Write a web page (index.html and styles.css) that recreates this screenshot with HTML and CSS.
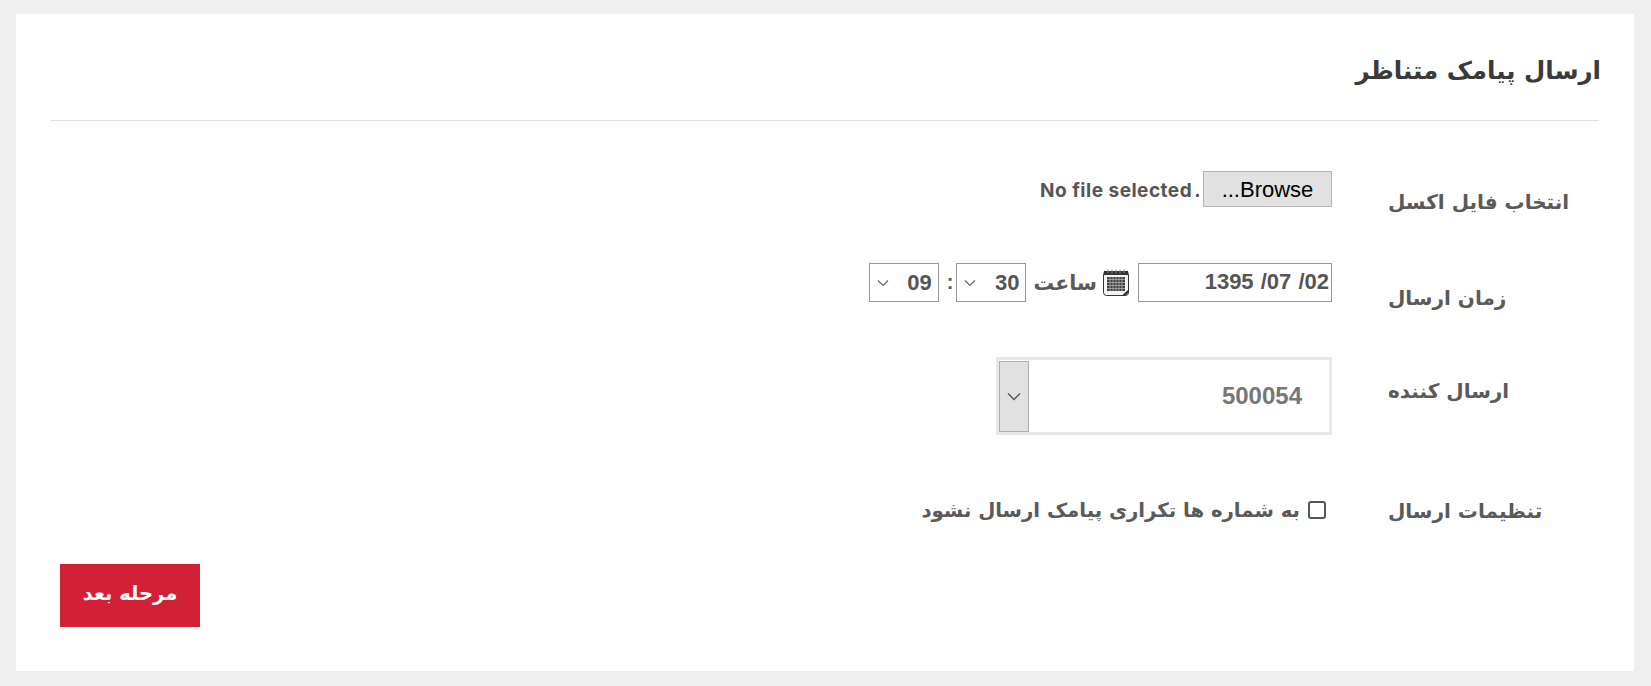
FILE: index.html
```html
<!DOCTYPE html>
<html lang="fa" dir="rtl">
<head>
    <meta charset="utf-8">
    <title>ارسال پیامک متناظر</title>
    <link rel="stylesheet" href="styles.css">
</head>
<body>
    <div class="card">
        <h1 class="title">ارسال پیامک متناظر</h1>
        <div class="form">
            <div class="row row-file">
                <label class="row-label">انتخاب فایل اکسل</label>
                <div class="row-field">
                    <span class="browse-button">Browse...</span>
                    <span class="file-name" dir="ltr">No file selected&#8202;.</span>
                </div>
            </div>
            <div class="row row-date">
                <label class="row-label">زمان ارسال</label>
                <div class="row-field">
                    <input class="date-input" type="text" value="1395 /07 /02" dir="ltr">
                    <svg class="calendar-icon" viewBox="0 0 26 27" width="26" height="27">
                        <rect x="0.5" y="2.5" width="25" height="24" rx="3" fill="#f4f4f4" stroke="#333" stroke-width="1"/>
                        <rect x="1" y="2" width="24" height="4" fill="#333"/>
                        <path d="M5 0.5v4M9 0.5v4M13 0.5v4M17 0.5v4M21 0.5v4" stroke="#888" stroke-width="1"/>
                        <rect x="4" y="8" width="18" height="14" fill="#444"/>
                        <path d="M4 10.5h18M4 13.5h18M4 16.5h18M4 19.5h18M7 8v14M10 8v14M13 8v14M16 8v14M19 8v14" stroke="#aaa" stroke-width="0.8"/>
                        <path d="M19 26.5l6.5-6v3l-3 3z" fill="#333"/>
                    </svg>
                    <span class="time-label">ساعت</span>
                    <span class="time-select"><span class="time-value">30</span><svg class="chevron" viewBox="0 0 12 8" width="12" height="8"><path d="M1 1.5l5 5 5-5" fill="none" stroke="#666" stroke-width="1.2"/></svg></span>
                    <span class="time-colon">:</span>
                    <span class="time-select"><span class="time-value">09</span><svg class="chevron" viewBox="0 0 12 8" width="12" height="8"><path d="M1 1.5l5 5 5-5" fill="none" stroke="#666" stroke-width="1.2"/></svg></span>
                </div>
            </div>
            <div class="row row-sender">
                <label class="row-label">ارسال کننده</label>
                <div class="row-field">
                    <div class="sender-select">
                        <span class="sender-value">500054</span>
                        <span class="sender-arrow"><svg viewBox="0 0 14 9" width="14" height="9"><path d="M1 1.5l6 6 6-6" fill="none" stroke="#555" stroke-width="1.3"/></svg></span>
                    </div>
                </div>
            </div>
            <div class="row row-options">
                <label class="row-label">تنظیمات ارسال</label>
                <div class="row-field">
                    <label class="check-line"><input class="check-box" type="checkbox">به شماره ها تکراری پیامک ارسال نشود</label>
                </div>
            </div>
        </div>
        <div class="actions">
            <a href="#" class="next-button">مرحله بعد</a>
        </div>
    </div>
</body>
</html>
```

FILE: styles.css
```css
html, body {
    height: 100%;
}

body {
    margin: 0;
    padding: 14px 17px 15px 16px;
    box-sizing: border-box;
    background-color: #efefef;
    font-family: "DejaVu Sans", sans-serif;
    color: #5a5a5a;
}

.card {
    height: 100%;
    box-sizing: border-box;
    background-color: #fff;
    padding: 0 35px 0 35px;
}

.title {
    margin: 0;
    height: 107px;
    box-sizing: border-box;
    padding-top: 42px;
    font-size: 24.5px;
    line-height: 30px;
    font-weight: bold;
    text-indent: -2px;
    color: #3a3a3a;
    border-bottom: 1px solid #e0e0e0;
}

.row {
    display: grid;
    grid-template-columns: 267px 1fr;
    align-items: start;
}

.row-label {
    padding-left: 56px;
    text-align: left;
    font-size: 20px;
    font-weight: bold;
    line-height: 28px;
}

.row-field {
    display: flex;
    align-items: center;
}

.row-file {
    margin-top: 50px;
    height: 36px;
}

.row-file .row-label {
    padding-top: 17px;
}

.browse-button {
    width: 129px;
    height: 36px;
    box-sizing: border-box;
    border: 1px solid #b5b5b5;
    background-color: #e1e1e1;
    font-family: "Liberation Sans", sans-serif;
    font-size: 22px;
    line-height: 36px;
    color: #000;
    text-align: center;
}

.file-name {
    margin-top: 2px;
    margin-right: 2px;
    font-family: Inter, sans-serif;
    font-size: 19px;
    font-weight: bold;
    letter-spacing: 0.5px;
    color: #555;
}

.row-date {
    margin-top: 56px;
    height: 39px;
}

.row-date .row-field {
    height: 39px;
}

.row-date .row-label {
    padding-top: 21px;
}

.date-input {
    width: 194px;
    height: 39px;
    box-sizing: border-box;
    border: 1px solid #999;
    padding: 0 2px 2px;
    text-align: right;
    font-family: "Liberation Sans", sans-serif;
    font-size: 22px;
    font-weight: bold;
    word-spacing: 1px;
    color: #555;
    outline: none;
}

.calendar-icon {
    margin-right: 9px;
}

.time-label {
    margin-right: 6px;
    font-size: 20.5px;
    font-weight: bold;
}

.time-select {
    display: flex;
    justify-content: space-between;
    align-items: center;
    width: 70px;
    height: 39px;
    margin-right: 7px;
    box-sizing: border-box;
    border: 1px solid #999;
    padding: 0 6px 0 7px;
}

.time-value {
    font-family: "Liberation Sans", sans-serif;
    font-size: 22px;
    font-weight: bold;
    color: #555;
}

.time-colon {
    margin-right: 3px;
    font-family: "Liberation Sans", sans-serif;
    font-size: 20px;
    font-weight: bold;
}

.time-colon + .time-select {
    margin-right: 8px;
}

.row-sender {
    margin-top: 55px;
    height: 78px;
}

.row-sender .row-label {
    padding-top: 20px;
}

.sender-select {
    display: flex;
    justify-content: space-between;
    align-items: center;
    width: 336px;
    height: 78px;
    box-sizing: border-box;
    border: 3px solid #e8e8e8;
}

.sender-value {
    margin-right: 27px;
    font-family: "Liberation Sans", sans-serif;
    font-size: 24px;
    font-weight: bold;
    color: #777;
}

.sender-arrow {
    display: flex;
    justify-content: center;
    align-items: center;
    width: 30px;
    height: 71px;
    box-sizing: border-box;
    border: 1px solid #b0b0b0;
    background-color: #e1e1e1;
}

.row-options {
    margin-top: 55px;
    height: 40px;
}

.row-options .row-label {
    padding-top: 7px;
}

.row-options .row-field {
    height: 40px;
}

.check-line {
    display: flex;
    align-items: center;
    font-size: 19.7px;
    font-weight: bold;
}

.check-box {
    appearance: none;
    width: 18px;
    height: 18px;
    margin: 0 6px 0 8px;
    box-sizing: border-box;
    border: 2px solid #555;
    border-radius: 3px;
    background-color: #fff;
}

.actions {
    display: flex;
    justify-content: flex-end;
    padding-left: 9px;
    margin-top: 34px;
}

.next-button {
    width: 140px;
    height: 63px;
    background-color: #d22137;
    color: #fff;
    font-size: 19.5px;
    font-weight: bold;
    line-height: 60px;
    text-align: center;
    text-decoration: none;
}
```
